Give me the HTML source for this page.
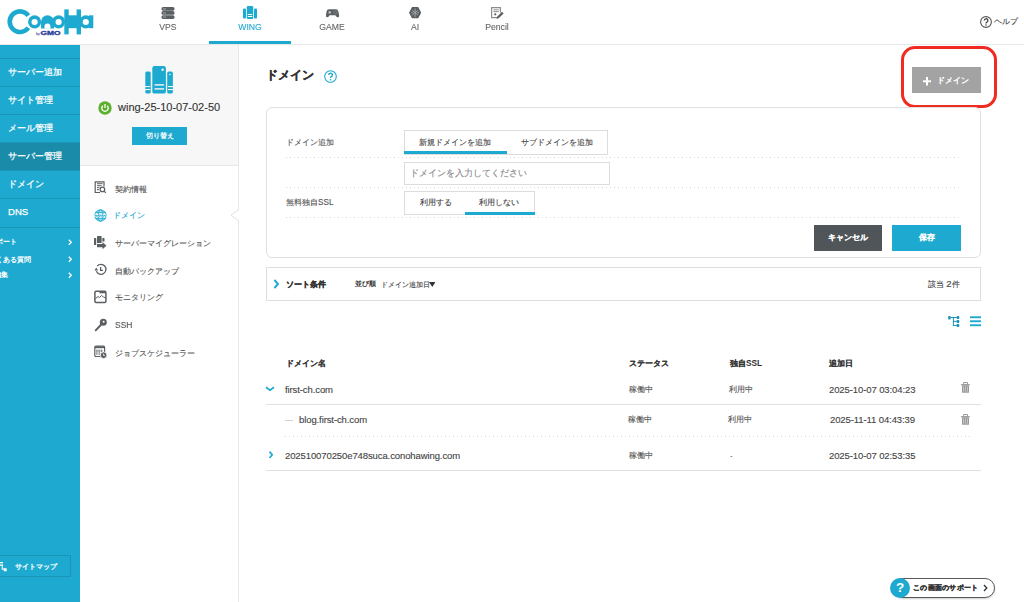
<!DOCTYPE html>
<html lang="ja"><head><meta charset="utf-8">
<style>
*{margin:0;padding:0;box-sizing:border-box}
html,body{width:1024px;height:602px;overflow:hidden;background:#fff;font-family:"Liberation Sans",sans-serif;color:#333;-webkit-text-stroke-width:.12px}
.abs{position:absolute;white-space:nowrap}
[style*="font-weight:bold"],.s2{-webkit-text-stroke-width:0}
#hdr{position:absolute;left:0;top:0;width:1024px;height:45px;background:#fff;border-bottom:1px solid #e8e8e8}
.nav{position:absolute;top:0;height:44px;width:82px;text-align:center;font-size:9.8px;color:#666}
.nav .lbl{position:absolute;left:0;right:0;top:20.5px;transform:scaleX(.88)}
.nav svg{position:absolute;left:34px;top:7px}
.nav.on{color:#1eaad0}
.nav.on:after{content:"";position:absolute;left:0;right:0;top:41px;height:3px;background:#1eaad0}
#side1{position:absolute;left:0;top:45px;width:80px;height:557px;background:#1eaad0}
.s1{position:absolute;left:0;width:80px;height:28px;border-top:1px solid #1a95b7;color:#fff;font-size:9px;font-weight:normal;-webkit-text-stroke-width:.25px;line-height:26px;padding-left:8px;white-space:nowrap}
.s1.on{background:#1a8ca9}
.s2{position:absolute;color:#fff;font-size:7.4px;font-weight:bold;white-space:nowrap}
.chev{position:absolute;left:68px}
#side2{position:absolute;left:80px;top:45px;width:159px;height:557px;background:#fff;border-right:1px solid #e8e8e8}
#srv{position:absolute;left:0;top:0;width:158px;height:121px;background:#f7f7f7;border-bottom:1px solid #e8e8e8}
.m{position:absolute;left:0;width:157px;height:14px}
.m .t{position:absolute;left:35px;top:0;font-size:8.2px;color:#555;line-height:14px;white-space:nowrap}
.m svg{position:absolute}
.m.on .t{color:#1eaad0}
.lab{position:absolute;font-size:8.2px;color:#555;white-space:nowrap}
.dot{position:absolute;height:1px;background-image:linear-gradient(to right,#d6d6d6 1px,transparent 1px);background-size:4px 1px}
.tabs{position:absolute;border:1px solid #ddd;background:#fff}
.tab{position:absolute;top:0;height:23px;line-height:23px;text-align:center;font-size:8.2px;color:#444;white-space:nowrap}
.tab.on:after{content:"";position:absolute;left:-1px;right:0;top:20px;height:3px;background:#1eaad0}
.btn{position:absolute;-webkit-text-stroke:.1px #fff;color:#fff;font-size:8.1px;font-weight:bold;text-align:center;white-space:nowrap}
.th{position:absolute;-webkit-text-stroke:.05px #333;font-size:8.2px;font-weight:bold;color:#333;white-space:nowrap}
.td{position:absolute;font-size:9.5px;color:#444;white-space:nowrap;letter-spacing:-.1px}
.tdj{position:absolute;font-size:8px;color:#555;white-space:nowrap}
.hl{position:absolute;left:266px;width:715px;height:1px;background:#e0e0e0}
</style></head><body>

<div id="hdr">
  <svg class="abs" style="left:0;top:0" width="100" height="44" viewBox="0 0 100 44">
    <defs><mask id="lm"><rect width="100" height="44" fill="#fff"/><ellipse cx="34.6" cy="22" rx="3.1" ry="2.9" fill="#000"/><ellipse cx="58.6" cy="22" rx="3.1" ry="2.9" fill="#000"/><ellipse cx="85.8" cy="22" rx="3.1" ry="2.9" fill="#000"/><path d="M44.5 28.8V26.5A2.95 2.95 0 0 1 50.4 26.5V28.8Z" fill="#000"/></mask></defs>
    <g fill="#1eaad0" mask="url(#lm)">
      <path d="M30.2 14.3A12.6 12.6 0 1 0 30.2 29.1L26.5 26.4A8 8 0 1 1 26.5 17Z"/>
      <circle cx="34.6" cy="21.85" r="6.55"/>
      <path d="M41 28.4V21.85A6.5 6.5 0 0 1 54 21.85V28.4Z"/>
      <circle cx="58.6" cy="21.85" r="6.55"/>
      <rect x="64.3" y="9.4" width="4.4" height="25"/>
      <rect x="76.6" y="9.4" width="4.4" height="25"/>
      <rect x="68" y="15.3" width="9" height="12.9"/>
      <circle cx="85.8" cy="21.85" r="6.55"/>
      <rect x="89" y="15.3" width="4.3" height="12.9"/>
    </g>
    <text x="36" y="34.6" font-family="Liberation Sans" font-size="3.2" font-weight="bold" fill="#2a3f9a">by</text><text x="40.5" y="34.6" font-family="Liberation Sans" font-size="5" font-weight="bold" fill="#2a3f9a" textLength="20" lengthAdjust="spacingAndGlyphs" stroke="#2a3f9a" stroke-width=".3">GMO</text>
  </svg>

  <div class="nav" style="left:127px">
    <svg width="14" height="13" viewBox="0 0 14 13"><g fill="#5a5f62"><rect x="0.5" y="0" width="13" height="3.7" rx="1.6"/><rect x="0.5" y="4.1" width="13" height="3.7" rx="1.6"/><rect x="0.5" y="8.2" width="13" height="3.7" rx="1.6"/></g><g fill="#9a9ea0"><rect x="2" y="1.3" width="3" height="1.1"/><rect x="2" y="5.4" width="3" height="1.1"/><rect x="2" y="9.5" width="3" height="1.1"/></g></svg>
    <div class="lbl">VPS</div>
  </div>
  <div class="nav on" style="left:209px">
    <svg width="14" height="13" viewBox="0 0 14 13" style="top:6px"><g fill="#1eaad0"><rect x="0" y="2.5" width="3" height="10" rx="1"/><rect x="11" y="2.5" width="3" height="10" rx="1"/><rect x="3.8" y="0" width="6.4" height="13" rx="1.2"/></g><g fill="#fff"><rect x="4.8" y="8" width="4.4" height="1"/><rect x="4.8" y="10" width="4.4" height="1"/></g></svg>
    <div class="lbl">WING</div>
  </div>
  <div class="nav" style="left:291px">
    <svg width="14" height="10" viewBox="0 0 14 10" style="top:8.5px;left:34.5px"><path d="M3.2 .3H9.8C11.3 .3 12 1 12.4 2.5L13.1 6.2C13.4 7.6 12.6 8.3 11.7 8.3C11 8.3 10.6 7.9 10.1 7.2L9.4 6.3H3.6L2.9 7.2C2.4 7.9 2 8.3 1.3 8.3C.4 8.3-.4 7.6-.1 6.2L.6 2.5C1 1 1.7 .3 3.2 .3Z" fill="#5a5f62"/><rect x="2.6" y="2.3" width="2.2" height="2.2" fill="#c9cbcc"/><circle cx="9.6" cy="3.3" r="1.6" fill="none" stroke="#8a8e90" stroke-width=".6"/></svg>
    <div class="lbl">GAME</div>
  </div>
  <div class="nav" style="left:374px">
    <svg width="13" height="12" viewBox="0 0 13 12" style="top:7px;left:35px"><path d="M0 5.7L3 .1H9.2L12.2 5.7L9.2 11.3H3Z" fill="#5a5f62"/><g stroke="#a9acae" stroke-width=".9" fill="none"><path d="M6.1 1.5V10.1M3.3 3.5L6.1 5.7L8.9 3.5M3.3 8L6.1 5.7L8.9 8M2.2 5.7H4M8.2 5.7H10"/></g></svg>
    <div class="lbl">AI</div>
  </div>
  <div class="nav" style="left:456px">
    <svg width="14" height="13" viewBox="0 0 14 13" style="top:6.5px;left:35px"><g fill="none" stroke="#8a8e90" stroke-width="1.2"><path d="M7 10.6H.6V.6H9.4V5.5"/></g><g fill="#8a8e90"><rect x="2.4" y="2.3" width="5.4" height="1"/><rect x="2.4" y="4.1" width="5.4" height="1"/></g><circle cx="4.3" cy="7.3" r="1.1" fill="#5a5f62"/><path d="M5.6 11.9L6.3 9.5L11 4.8L12.6 6.4L7.9 11.1Z" fill="#5a5f62"/></svg>
    <div class="lbl">Pencil</div>
  </div>

  <svg class="abs" style="left:980px;top:16px" width="12" height="12" viewBox="0 0 12 12"><circle cx="6" cy="6" r="5.4" fill="none" stroke="#555" stroke-width="1.1"/><path d="M4.3 4.6A1.8 1.8 0 1 1 6.6 6.3C6.1 6.6 6 6.9 6 7.5" fill="none" stroke="#444" stroke-width="1.3"/><circle cx="6" cy="9.1" r=".75" fill="#444"/></svg>
  <div class="abs" style="left:994px;top:16px;font-size:8px;color:#444;line-height:12px">ヘルプ</div>
</div>

<div id="side1">
  <div class="s1" style="top:13px">サーバー追加</div>
  <div class="s1" style="top:41px">サイト管理</div>
  <div class="s1" style="top:69px">メール管理</div>
  <div class="s1 on" style="top:97px">サーバー管理</div>
  <div class="s1" style="top:125px">ドメイン</div>
  <div class="s1" style="top:153px;height:29px;font-weight:normal;font-size:9.6px;line-height:26px">DNS</div>
  <div class="abs" style="left:0;top:182px;width:80px;height:1px;background:#1a95b7"></div>
  <div class="s2" style="top:192px;left:-11.5px;line-height:10px">サポート</div>
  <div class="s2" style="top:209.5px;left:-11.5px;line-height:10px">よくある質問</div>
  <div class="s2" style="top:224.5px;left:-6px;line-height:10px">編集</div>
  <svg class="chev" style="top:194px" width="5" height="7" viewBox="0 0 5 7"><path d="M.8 .8L3.3 3.3L.8 5.8" fill="none" stroke="#fff" stroke-width="1.3"/></svg>
  <svg class="chev" style="top:210.5px" width="5" height="7" viewBox="0 0 5 7"><path d="M.8 .8L3.3 3.3L.8 5.8" fill="none" stroke="#fff" stroke-width="1.3"/></svg>
  <svg class="chev" style="top:226.5px" width="5" height="7" viewBox="0 0 5 7"><path d="M.8 .8L3.3 3.3L.8 5.8" fill="none" stroke="#fff" stroke-width="1.3"/></svg>
  <div class="abs" style="left:-5px;top:510px;width:76px;height:22px;border:1px solid #1a95b7"></div>
  <svg class="abs" style="left:0;top:517px" width="7" height="10" viewBox="0 0 7 10"><g fill="#fff"><rect x="0" y="0" width="3" height="1.3"/><rect x="0" y="2.5" width="3" height="1.3"/><rect x="1.8" y="3" width="1" height="4.5"/><rect x="1.8" y="6.5" width="2.5" height="1"/><rect x="3.7" y="6.2" width="3" height="3" rx=".5"/></g></svg>
  <div class="abs" style="left:15px;top:517px;font-size:7.3px;font-weight:normal;color:#fff;line-height:10px;-webkit-text-stroke:.3px #fff">サイトマップ</div>
</div>
<div class="abs" style="left:80px;top:45px;width:1px;height:557px;background:#bfe5ef"></div>

<div id="side2">
  <div id="srv">
    <svg class="abs" style="left:65px;top:21px" width="29" height="29" viewBox="0 0 29 29"><g fill="#1eaad0"><rect x="0.3" y="5.6" width="5.4" height="21.9" rx="1.6"/><rect x="22.2" y="5.6" width="5.7" height="21.9" rx="1.6"/><rect x="7.3" y="0" width="13.6" height="27.6" rx="2.2"/></g><g fill="#f7f7f7"><rect x="9.5" y="18.2" width="9.6" height="1.4"/><rect x="9.5" y="22.2" width="9.6" height="1.4"/><circle cx="17.6" cy="3.8" r="1.2"/><rect x="0" y="20" width="5" height="1.1"/><rect x="0" y="23" width="5" height="1.1"/><rect x="23" y="20" width="5" height="1.1"/><rect x="23" y="23" width="5" height="1.1"/><circle cx="25" cy="8.5" r=".8"/></g></svg>
    <svg class="abs" style="left:18px;top:56px" width="14" height="14" viewBox="0 0 14 14"><circle cx="7" cy="7" r="6.7" fill="#5cb02e"/><path d="M4.8 4.8 A3.2 3.2 0 1 0 9.2 4.8" fill="none" stroke="#fff" stroke-width="1.3"/><rect x="6.35" y="3" width="1.3" height="4" fill="#fff"/></svg>
    <div class="abs" style="left:38px;top:55px;font-size:11px;color:#333;line-height:14px">wing-25-10-07-02-50</div>
    <div class="abs" style="left:52px;top:82px;width:55px;height:18px;background:#1eaad0;color:#fff;font-size:7px;font-weight:bold;text-align:center;line-height:18px">切り替え</div>
  </div>
  <svg style="position:absolute;left:150px;top:164px" width="9" height="13" viewBox="0 0 9 13"><path d="M9.5 0 L1 6.2 L9.5 12.5" fill="#fff" stroke="#e2e2e2" stroke-width="1"/></svg>
</div>

<!-- side2 menu (absolute page coords) -->
<div class="m" style="left:80px;top:181px"><svg style="left:14px;top:0" width="13" height="14" viewBox="0 0 13 14"><g fill="none" stroke="#5a5f62" stroke-width="1.2"><path d="M6 11.5H1.2V.8H10V5.5"/><circle cx="8.4" cy="8.4" r="2.3"/><path d="M10.1 10.1L11.8 11.8"/></g><g fill="#5a5f62"><rect x="3" y="2.2" width="5.5" height="1"/><rect x="3" y="4.2" width="4.5" height="1"/><rect x="3" y="6.2" width="2.5" height="1"/><rect x="3" y="8.2" width="2" height="1"/></g></svg><span class="t" style="top:1.5px">契約情報</span></div>
<div class="m on" style="left:80px;top:209px"><svg style="left:13.5px;top:0" width="13" height="13" viewBox="0 0 13 13"><circle cx="6.5" cy="6.5" r="6" fill="#d2eef6"/><g fill="none" stroke="#1eaad0" stroke-width="1"><circle cx="6.5" cy="6.5" r="5.6"/><ellipse cx="6.5" cy="6.5" rx="2.4" ry="5.6"/><path d="M1.5 3.3H11.5M1.5 9.7H11.5"/></g><rect x="0.5" y="5" width="12" height="3" fill="#fff"/><path d="M1 5.3L2 7.7L3 5.8L4 7.7L5 5.3M4.7 5.3L5.7 7.7L6.7 5.8L7.7 7.7L8.7 5.3M8.3 5.3L9.3 7.7L10.3 5.8L11.3 7.7L12.3 5.3" fill="none" stroke="#1eaad0" stroke-width=".8"/></svg><span class="t" style="top:0;left:32.5px">ドメイン</span></div>
<div class="m" style="left:80px;top:236px"><svg style="left:14px;top:0" width="13" height="13" viewBox="0 0 13 13"><g fill="#5a5f62"><rect x="0" y="2" width="2.2" height="7" rx=".5"/><rect x="3" y="0" width="4.6" height="7" rx=".6"/><rect x="8.3" y="2" width="2.2" height="3.5" rx=".5"/><path d="M3 8H8.5V6L12.5 9.8L8.5 13.2V11.3H3Z"/></g></svg><span class="t" style="top:.7px">サーバーマイグレーション</span></div>
<div class="m" style="left:80px;top:263px"><svg style="left:14px;top:0" width="13" height="13" viewBox="0 0 13 13"><g fill="none" stroke="#5a5f62" stroke-width="1.3"><path d="M3.2 3A5 5 0 1 1 2.4 8.3"/><path d="M6.6 4V7.4H9"/></g><path d="M0.5 7.5L2.2 4.5L4 7.5Z" fill="#5a5f62"/></svg><span class="t" style="top:1.7px">自動バックアップ</span></div>
<div class="m" style="left:80px;top:290px"><svg style="left:14px;top:0" width="13" height="14" viewBox="0 0 13 14"><g fill="none" stroke="#5a5f62" stroke-width="1.5"><rect x=".9" y="1.2" width="11" height="11.3" rx="1.2"/></g><rect x="5.5" y="1.5" width="6" height="1.8" fill="#5a5f62"/><path d="M1.5 8.5L4 6.5L5.5 7.5L7.5 5.5L9.5 7L12 8" fill="none" stroke="#5a5f62" stroke-width="1"/></svg><span class="t" style="top:1px">モニタリング</span></div>
<div class="m" style="left:80px;top:318px"><svg style="left:14px;top:0" width="13" height="14" viewBox="0 0 13 14"><circle cx="9.3" cy="4.2" r="3.5" fill="#5a5f62"/><circle cx="9.6" cy="3.8" r="1" fill="#fff"/><path d="M6.8 7L1.7 12.3" stroke="#5a5f62" stroke-width="1.9" stroke-linecap="round"/></svg><span class="t" style="top:0;font-size:9.2px;transform:scaleX(.92);transform-origin:left">SSH</span></div>
<div class="m" style="left:80px;top:345px"><svg style="left:14px;top:0" width="14" height="14" viewBox="0 0 14 14"><g fill="none" stroke="#5a5f62" stroke-width="1.2"><rect x=".8" y="1" width="9.8" height="10.5" rx="1.2"/></g><rect x="1" y="1.2" width="9.5" height="2" fill="#5a5f62"/><g fill="#8a8e90"><rect x="2.3" y="4.5" width="1.2" height="5.5"/><rect x="4.6" y="4.5" width="1.2" height="5.5"/><rect x="6.9" y="4.5" width="1.2" height="3"/><rect x="2" y="5.5" width="7" height=".8"/></g><circle cx="9.6" cy="10.2" r="3.3" fill="#5a5f62" stroke="#fff" stroke-width=".8"/><path d="M9.4 8.6V10.4H11" stroke="#fff" stroke-width=".8" fill="none"/></svg><span class="t" style="top:1.8px">ジョブスケジューラー</span></div>

<!-- MAIN -->
<div class="abs" style="left:265.5px;top:68px;font-size:11.8px;font-weight:bold;color:#333;line-height:14px;-webkit-text-stroke:.3px #333">ドメイン</div>
<svg class="abs" style="left:324px;top:70px" width="13" height="13" viewBox="0 0 13 13"><circle cx="6.5" cy="6.5" r="5.8" fill="none" stroke="#1eaad0" stroke-width="1.1"/><path d="M4.7 5A1.85 1.85 0 1 1 7.1 6.8C6.6 7.1 6.5 7.4 6.5 8" fill="none" stroke="#1eaad0" stroke-width="1.4"/><circle cx="6.5" cy="9.7" r=".8" fill="#1eaad0"/></svg>

<div class="abs" style="left:912px;top:67px;width:69px;height:26px;background:#a3a3a3"></div>
<svg class="abs" style="left:923px;top:77px" width="8" height="9" viewBox="0 0 8 9"><rect x="3" y="0" width="2" height="8.5" fill="#fff"/><rect x="0" y="3.3" width="8" height="2" fill="#fff"/></svg>
<div class="abs" style="left:937px;top:75.7px;font-size:7.8px;font-weight:normal;color:#fff;line-height:10px;-webkit-text-stroke:.35px #fff">ドメイン</div>
<div class="abs" style="left:901px;top:46px;width:96px;height:62px;border:3.5px solid #ef2b22;border-radius:14px"></div>

<div class="abs" style="left:266px;top:107px;width:715px;height:151px;border:1px solid #e0e0e0;border-radius:6px"></div>
<div class="lab" style="left:286px;top:138px;line-height:10px">ドメイン追加</div>
<div class="tabs" style="left:404px;top:130px;width:204px;height:25px">
  <div class="tab on" style="left:0;width:102px;padding-right:2px">新規ドメインを追加</div>
  <div class="tab" style="left:102px;width:100px">サブドメインを追加</div>
</div>
<div class="dot" style="left:286px;top:157px;width:674px"></div>
<div class="abs" style="left:404px;top:162px;width:206px;height:23px;border:1px solid #ddd"></div>
<div class="abs" style="left:409.5px;top:167.5px;font-size:9.2px;color:#888;line-height:11px">ドメインを入力してください</div>
<div class="dot" style="left:286px;top:187px;width:674px"></div>
<div class="lab" style="left:286px;top:198px;line-height:10px">無料独自SSL</div>
<div class="tabs" style="left:404px;top:190.5px;width:131px;height:24px">
  <div class="tab" style="left:0;width:61px;height:22px;line-height:22px">利用する</div>
  <div class="tab on" style="left:61px;width:69px;height:22px;line-height:22px"></div>
  <div class="abs" style="left:74px;top:0;height:22px;line-height:22px;font-size:8.2px;color:#444">利用しない</div>
</div>
<div class="dot" style="left:286px;top:217px;width:674px"></div>
<div class="btn" style="left:814px;top:225px;width:68px;height:26px;line-height:26px;background:#4f5558">キャンセル</div>
<div class="btn" style="left:892px;top:225px;width:69px;height:26px;line-height:26px;background:#1eaad0">保存</div>

<div class="abs" style="left:266px;top:267px;width:715px;height:34px;border:1px solid #dedede"></div>
<svg class="abs" style="left:273px;top:279px" width="7" height="10" viewBox="0 0 7 10"><path d="M1.5 1L5 5L1.5 9" fill="none" stroke="#1eaad0" stroke-width="1.9"/></svg>
<div class="abs" style="left:286px;top:279.5px;font-size:8.1px;font-weight:bold;color:#333;line-height:10px;-webkit-text-stroke:.25px #333">ソート条件</div>
<div class="abs" style="left:354.5px;top:279px;font-size:7px;font-weight:bold;color:#333;line-height:9px;-webkit-text-stroke-width:0">並び順</div>
<div class="abs" style="left:380.5px;top:279.5px;font-size:7px;color:#444;line-height:9px">ドメイン追加日</div>
<svg class="abs" style="left:428.5px;top:281.5px" width="6.5" height="5" viewBox="0 0 6.5 5"><path d="M0 0H6.5L3.25 5Z" fill="#333"/></svg>
<div class="abs" style="left:928px;top:279px;font-size:8px;color:#444;line-height:10px">該当 <span style="font-size:9.5px">2</span>件</div>

<svg class="abs" style="left:948px;top:316px" width="12" height="11" viewBox="0 0 12 11"><g fill="#1a93b8"><rect x="0.2" y="0" width="2.5" height="3.5" rx=".7"/><rect x="2.7" y="1" width="6" height="1"/><rect x="4.9" y="1" width="1" height="8.9"/><rect x="4.9" y="4.9" width="4" height="1"/><rect x="4.9" y="8.9" width="4" height="1"/><rect x="8.6" y="0" width="2.7" height="3" rx=".9"/><rect x="8.6" y="3.9" width="2.7" height="3" rx=".9"/><rect x="8.6" y="7.9" width="2.7" height="3.1" rx=".9"/></g></svg>
<svg class="abs" style="left:970px;top:316px" width="11" height="11" viewBox="0 0 11 11"><g fill="#1eaad0"><rect x="0" y="0.3" width="11" height="1.9"/><rect x="0" y="4.3" width="11" height="1.9"/><rect x="0" y="8.3" width="11" height="1.9"/></g></svg>

<div class="th" style="left:286px;top:359px;line-height:10px">ドメイン名</div>
<div class="th" style="left:629px;top:359px;line-height:10px">ステータス</div>
<div class="th" style="left:730px;top:359px;line-height:10px">独自SSL</div>
<div class="th" style="left:829px;top:359px;line-height:10px">追加日</div>

<svg class="abs" style="left:265px;top:386px" width="10" height="6" viewBox="0 0 10 6"><path d="M1 1.3L5 4.2L9 1.3" fill="none" stroke="#1eaad0" stroke-width="1.7"/></svg>
<div class="td" style="left:285px;top:384px;line-height:11px">first-ch.com</div>
<div class="tdj" style="left:629px;top:384.5px;line-height:10px">稼働中</div>
<div class="tdj" style="left:729px;top:384.5px;line-height:10px">利用中</div>
<div class="td" style="left:829px;top:384px;line-height:11px">2025-10-07 03:04:23</div>
<div class="hl" style="top:404px"></div>

<div class="abs" style="left:285px;top:420px;width:8px;height:1px;background:#d0d0d0"></div>
<div class="td" style="left:299px;top:413.5px;line-height:11px">blog.first-ch.com</div>
<div class="tdj" style="left:628px;top:415px;line-height:10px">稼働中</div>
<div class="tdj" style="left:728px;top:415px;line-height:10px">利用中</div>
<div class="td" style="left:830px;top:413.5px;line-height:11px">2025-11-11 04:43:39</div>
<div class="dot" style="left:285px;top:435.5px;width:687px"></div>

<svg class="abs" style="left:267.5px;top:451px" width="6" height="8" viewBox="0 0 6 8"><path d="M1.5 .6L4.2 3.8L1.5 7" fill="none" stroke="#1eaad0" stroke-width="1.7"/></svg>
<div class="td" style="left:285px;top:449.5px;line-height:11px">202510070250e748suca.conohawing.com</div>
<div class="tdj" style="left:629px;top:450.5px;line-height:10px">稼働中</div>
<div class="tdj" style="left:730px;top:450.5px;line-height:10px">-</div>
<div class="td" style="left:829px;top:449.5px;line-height:11px">2025-10-07 02:53:35</div>
<div class="hl" style="top:470px"></div>

<svg class="abs" style="left:961px;top:382px" width="10" height="11" viewBox="0 0 10 11"><g fill="#9a9a9a"><path d="M2.2 2.3V.6C2.2.2 2.5 0 2.9 0H6.2C6.6 0 6.9.2 6.9.6V2.3H5.9V.9H3.2V2.3Z"/><rect x="0" y="2.1" width="8.8" height="1.2"/><rect x="1" y="3.2" width="7" height="7.5" rx=".5"/></g><g fill="#d0d0d0"><rect x="2.2" y="4.4" width=".8" height="5.3"/><rect x="4.1" y="4.4" width=".8" height="5.3"/><rect x="6" y="4.4" width=".8" height="5.3"/></g></svg>
<svg class="abs" style="left:961px;top:414px" width="10" height="11" viewBox="0 0 10 11"><g fill="#9a9a9a"><path d="M2.2 2.3V.6C2.2.2 2.5 0 2.9 0H6.2C6.6 0 6.9.2 6.9.6V2.3H5.9V.9H3.2V2.3Z"/><rect x="0" y="2.1" width="8.8" height="1.2"/><rect x="1" y="3.2" width="7" height="7.5" rx=".5"/></g><g fill="#d0d0d0"><rect x="2.2" y="4.4" width=".8" height="5.3"/><rect x="4.1" y="4.4" width=".8" height="5.3"/><rect x="6" y="4.4" width=".8" height="5.3"/></g></svg>

<div class="abs" style="left:893px;top:578px;width:102px;height:20px;border:1px solid #5a5a5a;border-radius:10px;background:#fff;box-shadow:0 1px 2px rgba(0,0,0,.2)"></div>
<div class="abs" style="left:890px;top:578px;width:20px;height:20px;border-radius:50%;background:#1eaad0"></div>
<div class="abs" style="left:890px;top:578px;width:20px;height:20px;color:#fff;font-size:13.5px;font-weight:bold;text-align:center;line-height:20px">?</div>
<div class="abs" style="left:913px;top:583px;letter-spacing:.28px;font-size:7px;font-weight:bold;color:#333;line-height:10px;-webkit-text-stroke:.25px #333">この画面のサポート</div>
<svg class="abs" style="left:983px;top:584px" width="5" height="8" viewBox="0 0 5 8"><path d="M1 1L3.8 4L1 7" fill="none" stroke="#333" stroke-width="1.3"/></svg>

</body></html>
